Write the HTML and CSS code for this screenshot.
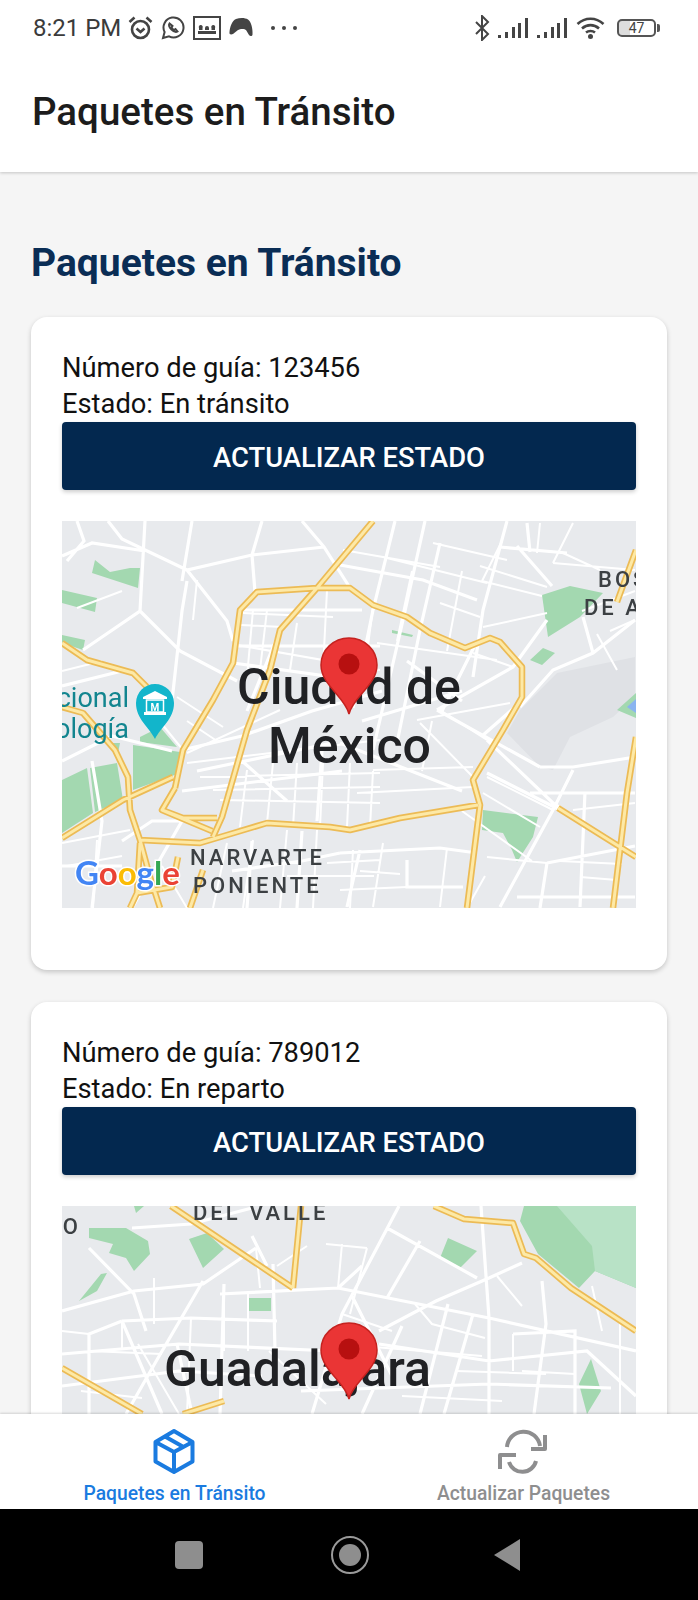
FILE: index.html
```html
<!DOCTYPE html>
<html lang="es">
<head>
    <meta charset="utf-8">
    <title>Paquetes en Tránsito</title>
    <link rel="stylesheet" href="styles.css">
</head>
<body>
<div class="screen">

    <!-- Status bar -->
    <div class="status-bar">
        <div class="status-group">
            <span class="status-time">8:21 PM</span>
            <svg class="ico" width="25" height="24" viewBox="0 0 25 24"><circle cx="12.5" cy="13.5" r="8.5"/><path d="M8.5 12.5l4 3.5 4-3.5M1.5 6l5-4.5M23.5 6l-5-4.5"/></svg>
            <svg class="ico ico-thin" width="24" height="24" viewBox="0 0 24 24"><path d="M2 22l1.6-6A10 10 0 1 1 8 20.4z"/><path d="M8.5 7.5c-1 1.500 0 4 2 6s4.500 3 6 2l-2-2.500-1.500 1c-1-.5-2-1.500-2.500-2.500l1-1.500z"/></svg>
            <svg class="ico ico-thin" width="28" height="24" viewBox="0 0 28 24"><rect x="1" y="1" width="26" height="22"/><path class="ico-solid" d="M5 15h18v3H5zM12 12a2 2 0 1 1 4 0v2h-4zM6 12a2 2 0 1 1 3.500 0v2H6zM18.500 12a2 2 0 1 1 3.500 0v2h-3.500z"/></svg>
            <svg class="ico-fill" width="24" height="22" viewBox="0 0 24 22"><path d="M7 2c4-1.500 9-1.500 12 .5 3 2 5 9 4.500 15-.2 2-2.500 2-3.500.5l-3-5c-1-1.500-6-1.500-8 0l-5 4c-2 1-4 .5-3.500-2C1 10 3 3.500 7 2z"/></svg>
            <span class="status-dots">
                <i></i><i></i><i></i>
            </span>
        </div>
        <div class="status-group">
            <svg class="ico ico-thin" width="16" height="26" viewBox="0 0 16 26"><path d="M2 7l12 12-6 6V1l6 6L2 19"/></svg>
            <svg class="ico-fill" width="31" height="20" viewBox="0 0 31 20"><path d="M0 17h3v3H0zM7 14h3v6H7zM14 9h3v11h-3zM20 5h3v15h-3zM27 0h3v20h-3z"/></svg>
            <svg class="ico-fill" width="31" height="20" viewBox="0 0 31 20"><path d="M0 17h3v3H0zM7 14h3v6H7zM14 9h3v11h-3zM20 5h3v15h-3zM27 0h3v20h-3z"/></svg>
            <svg class="ico" width="29" height="24" viewBox="0 0 29 24"><path d="M1.500 8c7.500-7 18.500-7 26 0M6 12.500c5-4.500 12-4.500 17 0M10 16.500c2.500-2 6.500-2 9 0"/><circle class="ico-solid" cx="14.500" cy="20.500" r="2.500"/></svg>
            <div class="battery">
                <span class="battery-level">47</span>
            </div>
        </div>
    </div>

    <!-- Header -->
    <header class="app-header">
        <h1>Paquetes en Tránsito</h1>
    </header>

    <!-- Lista de paquetes -->
    <main class="content">
        <h2 class="section-title">Paquetes en Tránsito</h2>

        <section class="card">
            <p class="card-line">Número de guía: 123456</p>
            <p class="card-line">Estado: En tránsito</p>
            <button class="update-btn" type="button">ACTUALIZAR ESTADO</button>
            <div class="map">
                <svg class="map-svg" viewBox="0 0 574 387" width="574" height="387">
                    <path class="area-urban" d="M445 212L458 189 495 152 573 136V176L551 196 508 216 491 249 478 246z"/>
                    <path class="area-green" d="M33 39L48 51 68 47 78 47 76 67 30 52zM0 69L35 77 33 91 0 82zM0 114L23 119 21 129 0 122zM71 224L118 231 118 252 71 269zM78 216L98 206 115 226 78 221zM0 259L25 247 31 292 0 312zM28 247L55 242 61 279 33 291zM48 222L58 222 56 232zM480 74L508 65 541 72 518 96 486 116zM468 139L481 127 493 132 480 144zM330 109L351 114 350 116 330 112zM421 289L476 296 471 316 455 341 450 329 441 312 420 309zM555 189L574 172V197z"/>
                    <path class="area-water" d="M565 186L574 178V192z"/>
                    <path class="road-thin" d="M181 92L271 96M178 104L221 106M175 124L318 149M191 89L185 156M205 89L198 149M235 102L228 149M265 69L261 149M311 86L305 132M125 232L218 189M125 242L318 219M138 256L318 252M151 269L318 266M158 279L318 282M185 249L178 306M211 242L205 302M235 242L231 306M261 242L258 306M288 242L285 306M311 250L308 306M165 322L151 387M191 319L181 387M225 309L218 387M255 309L251 387M291 329L288 387M265 342L318 339M225 355H312M35 319L31 387M0 322L68 309M135 59L131 99M78 176L121 229M115 176L161 206M125 200L155 220M281 29L378 46M321 36L425 62M371 22L445 39M418 45L485 66M378 82L418 96M421 106L485 92M411 132L451 146M315 122L435 139M355 199L448 182M378 189L425 219M358 202L411 256M311 249L411 246M295 272L411 266M511 2L491 42M478 2L475 32M501 32L538 49M491 42L573 49M520 90L573 70M548 110L573 99M535 113L555 149M425 256L491 289M421 272L478 306M278 369L345 366M425 336L485 342M423 355L405 387M511 289L573 282M498 340L560 343M518 356L555 359M385 327L378 386M321 322L311 386M298 350L338 353M15 87L60 70M0 150L40 140M5 345L60 335M100 345L125 387M440 20L420 60L480 75M350 50L335 120M400 50L385 130M370 200L360 250M400 290L470 340"/>
                    <path class="road-minor" d="M46 0L60 18 125 49 190 34 262 26M83 0L78 90 21 129M78 90L118 130 175 160M125 49L165 100 171 120M125 60L120 90 110 180M130 0L120 60M190 34L193 71M200 0L190 34M240 0L262 26 290 70M0 35L30 22 83 30M178 89H300M175 125H318M171 142L300 160M218 109L185 190M0 240L50 215 110 230M30 240L40 300 30 387M15 0L22 20 5 40M0 165L60 150M120 229L180 215 250 190 320 170M135 250L270 222M120 270L280 250M120 300L70 387M190 320L185 387M240 310L235 387M60 320L90 300 130 300M260 230L255 300M60 345H0M170 350L240 340 278 332M225 280L180 240M278 44L361 59 415 79M333 0L311 89 291 187M363 0L341 99 311 229M378 22L358 109 335 222M445 0L421 89 411 156M465 2L468 31M438 26L505 32M455 25L490 65M485 99L451 146 375 189M573 99L531 132 491 149 458 186M521 96L531 132M425 219L491 282 573 336M375 189L478 246M478 246H511L573 236M511 249L491 289 438 386M425 252L520 300M468 272H573M523 271L518 386M278 332L378 327 415 332M298 329L285 386M345 339V366H401M455 376H573M485 342L478 387M485 342L573 325M300 200L400 170M278 222L400 270M415 120L380 190M345 140L400 180M460 180L420 215"/>
                    <g class="road-major">
                        <path d="M0 186L21 192 53 229 66 256 68 289 78 319 138 322 165 314 205 302 268 306 288 309 338 297 416 284M78 319L88 356 98 387M78 322L75 372 68 387M116 336L110 366 75 372M141 349L128 387M0 122L25 139 71 152 85 166M0 317L61 279 111 256M311 0L255 67 218 109 208 149 185 209 160 296 151 316M113 267L121 229 151 179 171 142 178 89 195 71 255 67 288 67 311 84 345 96 368 112 403 127 428 117 438 121 460 146 460 176 441 209 411 259 418 284 405 387M113 267L100 289 121 297 155 297M100 289L150 310M496 287L574 336M574 216L565 272 551 387M574 29L555 81"/>
                        <path class="road-major-core" d="M0 186L21 192 53 229 66 256 68 289 78 319 138 322 165 314 205 302 268 306 288 309 338 297 416 284M78 319L88 356 98 387M78 322L75 372 68 387M116 336L110 366 75 372M141 349L128 387M0 122L25 139 71 152 85 166M0 317L61 279 111 256M311 0L255 67 218 109 208 149 185 209 160 296 151 316M113 267L121 229 151 179 171 142 178 89 195 71 255 67 288 67 311 84 345 96 368 112 403 127 428 117 438 121 460 146 460 176 441 209 411 259 418 284 405 387M113 267L100 289 121 297 155 297M100 289L150 310M496 287L574 336M574 216L565 272 551 387M574 29L555 81"/>
                    </g>
                    <text class="label-poi" text-anchor="end" x="67" y="186">cional</text>
                    <text class="label-poi" text-anchor="end" x="67" y="217">ología</text>
                    <path class="poi-pin" d="M93 218C87 206 74 198 74 182a19 19 0 0 1 38 0C112 198 99 206 93 218z"/>
                    <path class="poi-mark" d="M93 170L105 176V178H81V176zM82 191H104V194H82z"/>
                    <rect class="poi-box" x="84.500" y="179" width="17" height="12"/>
                    <text class="poi-letter" text-anchor="middle" x="93" y="189.500">M</text>
                    <text class="label-area" x="128" y="344">NARVARTE</text>
                    <text class="label-area" x="131" y="372">PONIENTE</text>
                    <text class="label-area" x="536" y="66">BOS</text>
                    <text class="label-area" x="522" y="94">DE A</text>
                    <text class="label-city" x="175" y="183">Ciudad de</text>
                    <text class="label-city" x="206" y="242">México</text>
                    <text class="label-google" x="13" y="364"><tspan class="g-blue">G</tspan><tspan class="g-red">o</tspan><tspan class="g-yellow">o</tspan><tspan class="g-blue">g</tspan><tspan class="g-green">l</tspan><tspan class="g-red">e</tspan></text>
                </svg>
                <svg class="map-pin" width="58" height="78" viewBox="0 0 58 78"><path class="pin-body" d="M29 77C25 60 1 48 1 28a28 27 0 0 1 56 0C57 48 33 60 29 77z"/><circle class="pin-dot" cx="29" cy="27" r="10.500"/></svg>
            </div>
        </section>

        <section class="card">
            <p class="card-line">Número de guía: 789012</p>
            <p class="card-line">Estado: En reparto</p>
            <button class="update-btn" type="button">ACTUALIZAR ESTADO</button>
            <div class="map">
                <svg class="map-svg" viewBox="0 0 574 387" width="574" height="387">
                    <path class="area-green" d="M458 15L462 0H574V82L533 65 517 82 476 48zM27 22L64 22 86 35 88 48 72 65 64 52 47 47 51 38 27 32zM127 33L145 27 162 43 141 62zM17 95L39 68 45 67 35 85zM378 52L386 32 415 45 398 62zM187 92H209V105H187zM517 178L529 153 539 185 525 208zM72 0H82L74 7z"/>
                    <path class="area-green-light" d="M495 0H574V82L533 65 530 40z"/>
                    <path class="road-thin" d="M129 112L125 208M162 88V145M186 85V145M27 145L100 148M60 115V142M92 72V118M305 42L288 108M353 98L370 118L423 132M451 128V165M460 165L513 168M394 165L484 168M558 118V208M194 42L198 82M264 38L305 42M280 38L276 82M76 138L117 208M207 145L264 198M19 185L80 192M280 108L330 125M0 125L27 128M300 140L420 150M340 190L440 195M435 70L460 100M530 80L540 125M245 40L215 60"/>
                    <path class="road-minor" d="M0 105L72 85 141 78 194 42M27 42L72 88 84 125M70 22L129 18 190 2M158 88L276 82 427 112 574 145M337 0L280 108 250 208M427 72L374 95 317 125M460 57L427 72M325 22L415 72M358 35L325 92M419 0L427 112V208M60 115L27 128V208M60 115L129 112 215 115M0 148L117 138 270 145M451 128L513 125V208M480 75L484 118 472 208M317 138L427 155 525 145 574 190M141 75L96 152 64 208M162 78L158 208M211 58L213 145M386 98L358 208M411 108L382 208M239 185L427 178 549 182M0 180L117 165 200 170M115 138L130 208M60 115L100 208M190 30L205 60M300 60L276 82M290 90L330 170M340 120L300 208"/>
                    <g class="road-major">
                        <path d="M109 0L231 82M239 0L231 82M372 0L402 13 451 17 462 48 474 52 509 82 574 125M0 162L80 208M121 208L162 195"/>
                        <path class="road-major-core" d="M109 0L231 82M239 0L231 82M372 0L402 13 451 17 462 48 474 52 509 82 574 125M0 162L80 208M121 208L162 195"/>
                    </g>
                    <text class="label-area" x="131" y="14">DEL VALLE</text>
                    <text class="label-area" x="-16" y="28">RO</text>
                    <text class="label-city" x="102" y="180">Guadalajara</text>
                </svg>
                <svg class="map-pin" width="58" height="78" viewBox="0 0 58 78"><path class="pin-body" d="M29 77C25 60 1 48 1 28a28 27 0 0 1 56 0C57 48 33 60 29 77z"/><circle class="pin-dot" cx="29" cy="27" r="10.500"/></svg>
            </div>
        </section>
    </main>

    <!-- Tabs -->
    <nav class="tab-bar">
        <div class="tab tab-active">
            <svg class="tab-icon" width="60" height="58" viewBox="0 0 60 58"><path d="M29 9L47.500 20V39.500L29 50 10.500 39.500V20zM29 30V50M10.500 20L29 30 47.500 20M20 14.500L38.500 25"/></svg>
            <span class="tab-label">Paquetes en Tránsito</span>
        </div>
        <div class="tab">
            <svg class="tab-icon" width="64" height="58" viewBox="0 0 64 58"><path d="M15 25A16.600 16.600 0 0 1 48 24M53 13V27H39M44 39A14 14 0 0 1 17 40M24 33H8V47"/></svg>
            <span class="tab-label">Actualizar Paquetes</span>
        </div>
    </nav>

    <!-- Android nav -->
    <div class="system-nav">
        <span class="nav-square"></span>
        <span class="nav-circle"><i></i></span>
        <span class="nav-back"></span>
    </div>
</div>
</body>
</html>
```

FILE: styles.css
```css
* {
    box-sizing: border-box;
}

body {
    margin: 0;
    font-family: Roboto, "Liberation Sans", sans-serif;
    background-color: #000;
}

.screen {
    width: 698px;
    height: 1600px;
    display: flex;
    flex-direction: column;
    overflow: hidden;
    background-color: #f5f5f5;
}

/* Status bar */
.status-bar {
    height: 56px;
    flex: none;
    position: relative;
    z-index: 2;
    display: flex;
    justify-content: space-between;
    align-items: center;
    padding: 0 42px 0 33px;
    background-color: #fff;
}

.status-group {
    display: flex;
    align-items: center;
    gap: 8px;
}

.status-time {
    width: 87px;
    font-size: 24px;
    white-space: nowrap;
    color: #3b3b3b;
}

.ico {
    fill: none;
    stroke: #444;
    stroke-width: 2.6;
}

.ico-thin {
    stroke-width: 2;
}

.ico-solid {
    fill: #444;
    stroke: none;
}

.ico-fill {
    fill: #444;
}

.status-dots {
    display: flex;
    gap: 7px;
    margin-left: 10px;
}

.status-dots i {
    width: 4px;
    height: 4px;
    border-radius: 50%;
    background-color: #444;
}

.battery {
    position: relative;
    width: 39px;
    height: 18px;
    margin: 0 0 0 4px;
    border: 2px solid #555;
    border-radius: 5px;
    display: flex;
    align-items: center;
    justify-content: center;
    background: linear-gradient(90deg, #ddd 0 30%, #fff 30%);
}

.battery::after {
    content: "";
    position: absolute;
    right: -6px;
    top: 3px;
    width: 3px;
    height: 8px;
    background-color: #555;
    border-radius: 0 2px 2px 0;
}

.battery-level {
    font-size: 14px;
    color: #444;
}

/* Header */
.app-header {
    height: 116px;
    flex: none;
    position: relative;
    z-index: 1;
    display: flex;
    align-items: center;
    padding: 0 32px 6px;
    background-color: #fff;
    box-shadow: 0 1px 3px rgba(0, 0, 0, 0.2);
}

.app-header h1 {
    margin: 0;
    font-size: 38.5px;
    font-weight: 500;
    color: #1c1c1c;
}

/* Content */
.content {
    flex: 1;
    min-height: 0;
    overflow: hidden;
    padding: 0 31px;
}

.section-title {
    margin: 66px 0 0;
    height: 79px;
    font-size: 39px;
    line-height: 50px;
    font-weight: 700;
    color: #0a2d55;
}

.card {
    height: 653px;
    margin-bottom: 32px;
    padding: 33px 31px 0;
    background-color: #fff;
    border-radius: 16px;
    box-shadow: 0 2px 5px rgba(0, 0, 0, 0.2);
}

.card-line {
    margin: 0;
    font-size: 27.3px;
    line-height: 36px;
    color: #111;
}

.update-btn {
    display: block;
    width: 100%;
    height: 68px;
    margin-bottom: 31px;
    padding: 3px 0 0;
    border: none;
    border-radius: 4px;
    background-color: #03284f;
    color: #fff;
    font-family: inherit;
    font-size: 27.4px;
    font-weight: 500;
    box-shadow: 0 2px 4px rgba(0, 0, 0, 0.2);
}

/* Map */
.map {
    position: relative;
    height: 387px;
    overflow: hidden;
    background-color: #e8eaed;
}

.map-svg {
    display: block;
    filter: blur(0.4px);
}

.map-pin {
    position: absolute;
    left: 50%;
    bottom: 50%;
    transform: translateX(-50%);
}

.pin-body {
    fill: #ea3535;
    stroke: #c5221f;
    stroke-width: 1.5;
}

.pin-dot {
    fill: #b71010;
}

.area-green {
    fill: #a3d8b0;
}

.area-green-light {
    fill: #b8e2c6;
}

.area-water {
    fill: #8ab4f0;
}

.area-urban {
    fill: #dfe1e5;
}

.road-thin {
    fill: none;
    stroke: #fff;
    stroke-width: 2;
}

.road-minor {
    fill: none;
    stroke: #fff;
    stroke-width: 3.2;
}

.road-major path {
    fill: none;
    stroke: #ecbb55;
    stroke-width: 6.5;
    stroke-linejoin: round;
}

.road-major .road-major-core {
    stroke: #fde9a6;
    stroke-width: 3;
}

.label-city {
    font-size: 50px;
    font-weight: 500;
    fill: #202124;
}

.label-area {
    font-size: 22px;
    font-weight: 500;
    letter-spacing: 3px;
    fill: #3c4043;
}

.label-poi {
    font-size: 27px;
    fill: #12858f;
}

.poi-pin {
    fill: #12b5cb;
}

.poi-mark {
    fill: #fff;
}

.poi-box {
    fill: none;
    stroke: #fff;
    stroke-width: 1.5;
}

.poi-letter {
    font-size: 10px;
    font-weight: 700;
    fill: #fff;
}

.label-google {
    font-family: Lato, sans-serif;
    font-size: 33px;
    font-weight: 700;
    paint-order: stroke;
    stroke: #fff;
    stroke-width: 3px;
}

.g-blue { fill: #4285f4; }
.g-red { fill: #ea4335; }
.g-yellow { fill: #fbbc05; }
.g-green { fill: #34a853; }

/* Tabs */
.tab-bar {
    height: 95px;
    flex: none;
    position: relative;
    z-index: 1;
    display: flex;
    background-color: #fff;
    box-shadow: 0 -1px 2px rgba(0, 0, 0, 0.15);
}

.tab {
    flex: 1;
    display: flex;
    flex-direction: column;
    align-items: center;
    padding-top: 8px;
    color: #8e8e8f;
}

.tab-active {
    color: #1a7be0;
}

.tab-icon {
    fill: none;
    stroke: currentColor;
    stroke-width: 4;
    stroke-linejoin: round;
}

.tab-label {
    font-size: 19.3px;
    font-weight: 500;
    line-height: 22px;
    margin-top: 3px;
}

/* Android nav */
.system-nav {
    height: 91px;
    flex: none;
    display: flex;
    align-items: center;
    background-color: #000;
    padding-left: 175px;
}

.nav-square {
    width: 28px;
    height: 28px;
    border-radius: 4px;
    background-color: #8e8e8e;
}

.nav-circle {
    width: 38px;
    height: 38px;
    margin-left: 128px;
    border: 2px solid #9a9a9a;
    border-radius: 50%;
    display: flex;
    align-items: center;
    justify-content: center;
}

.nav-circle i {
    width: 22px;
    height: 22px;
    border-radius: 50%;
    background-color: #8e8e8e;
}

.nav-back {
    width: 0;
    height: 0;
    margin-left: 125px;
    border-style: solid;
    border-width: 16px 26px 16px 0;
    border-color: transparent #8e8e8e transparent transparent;
}
```
